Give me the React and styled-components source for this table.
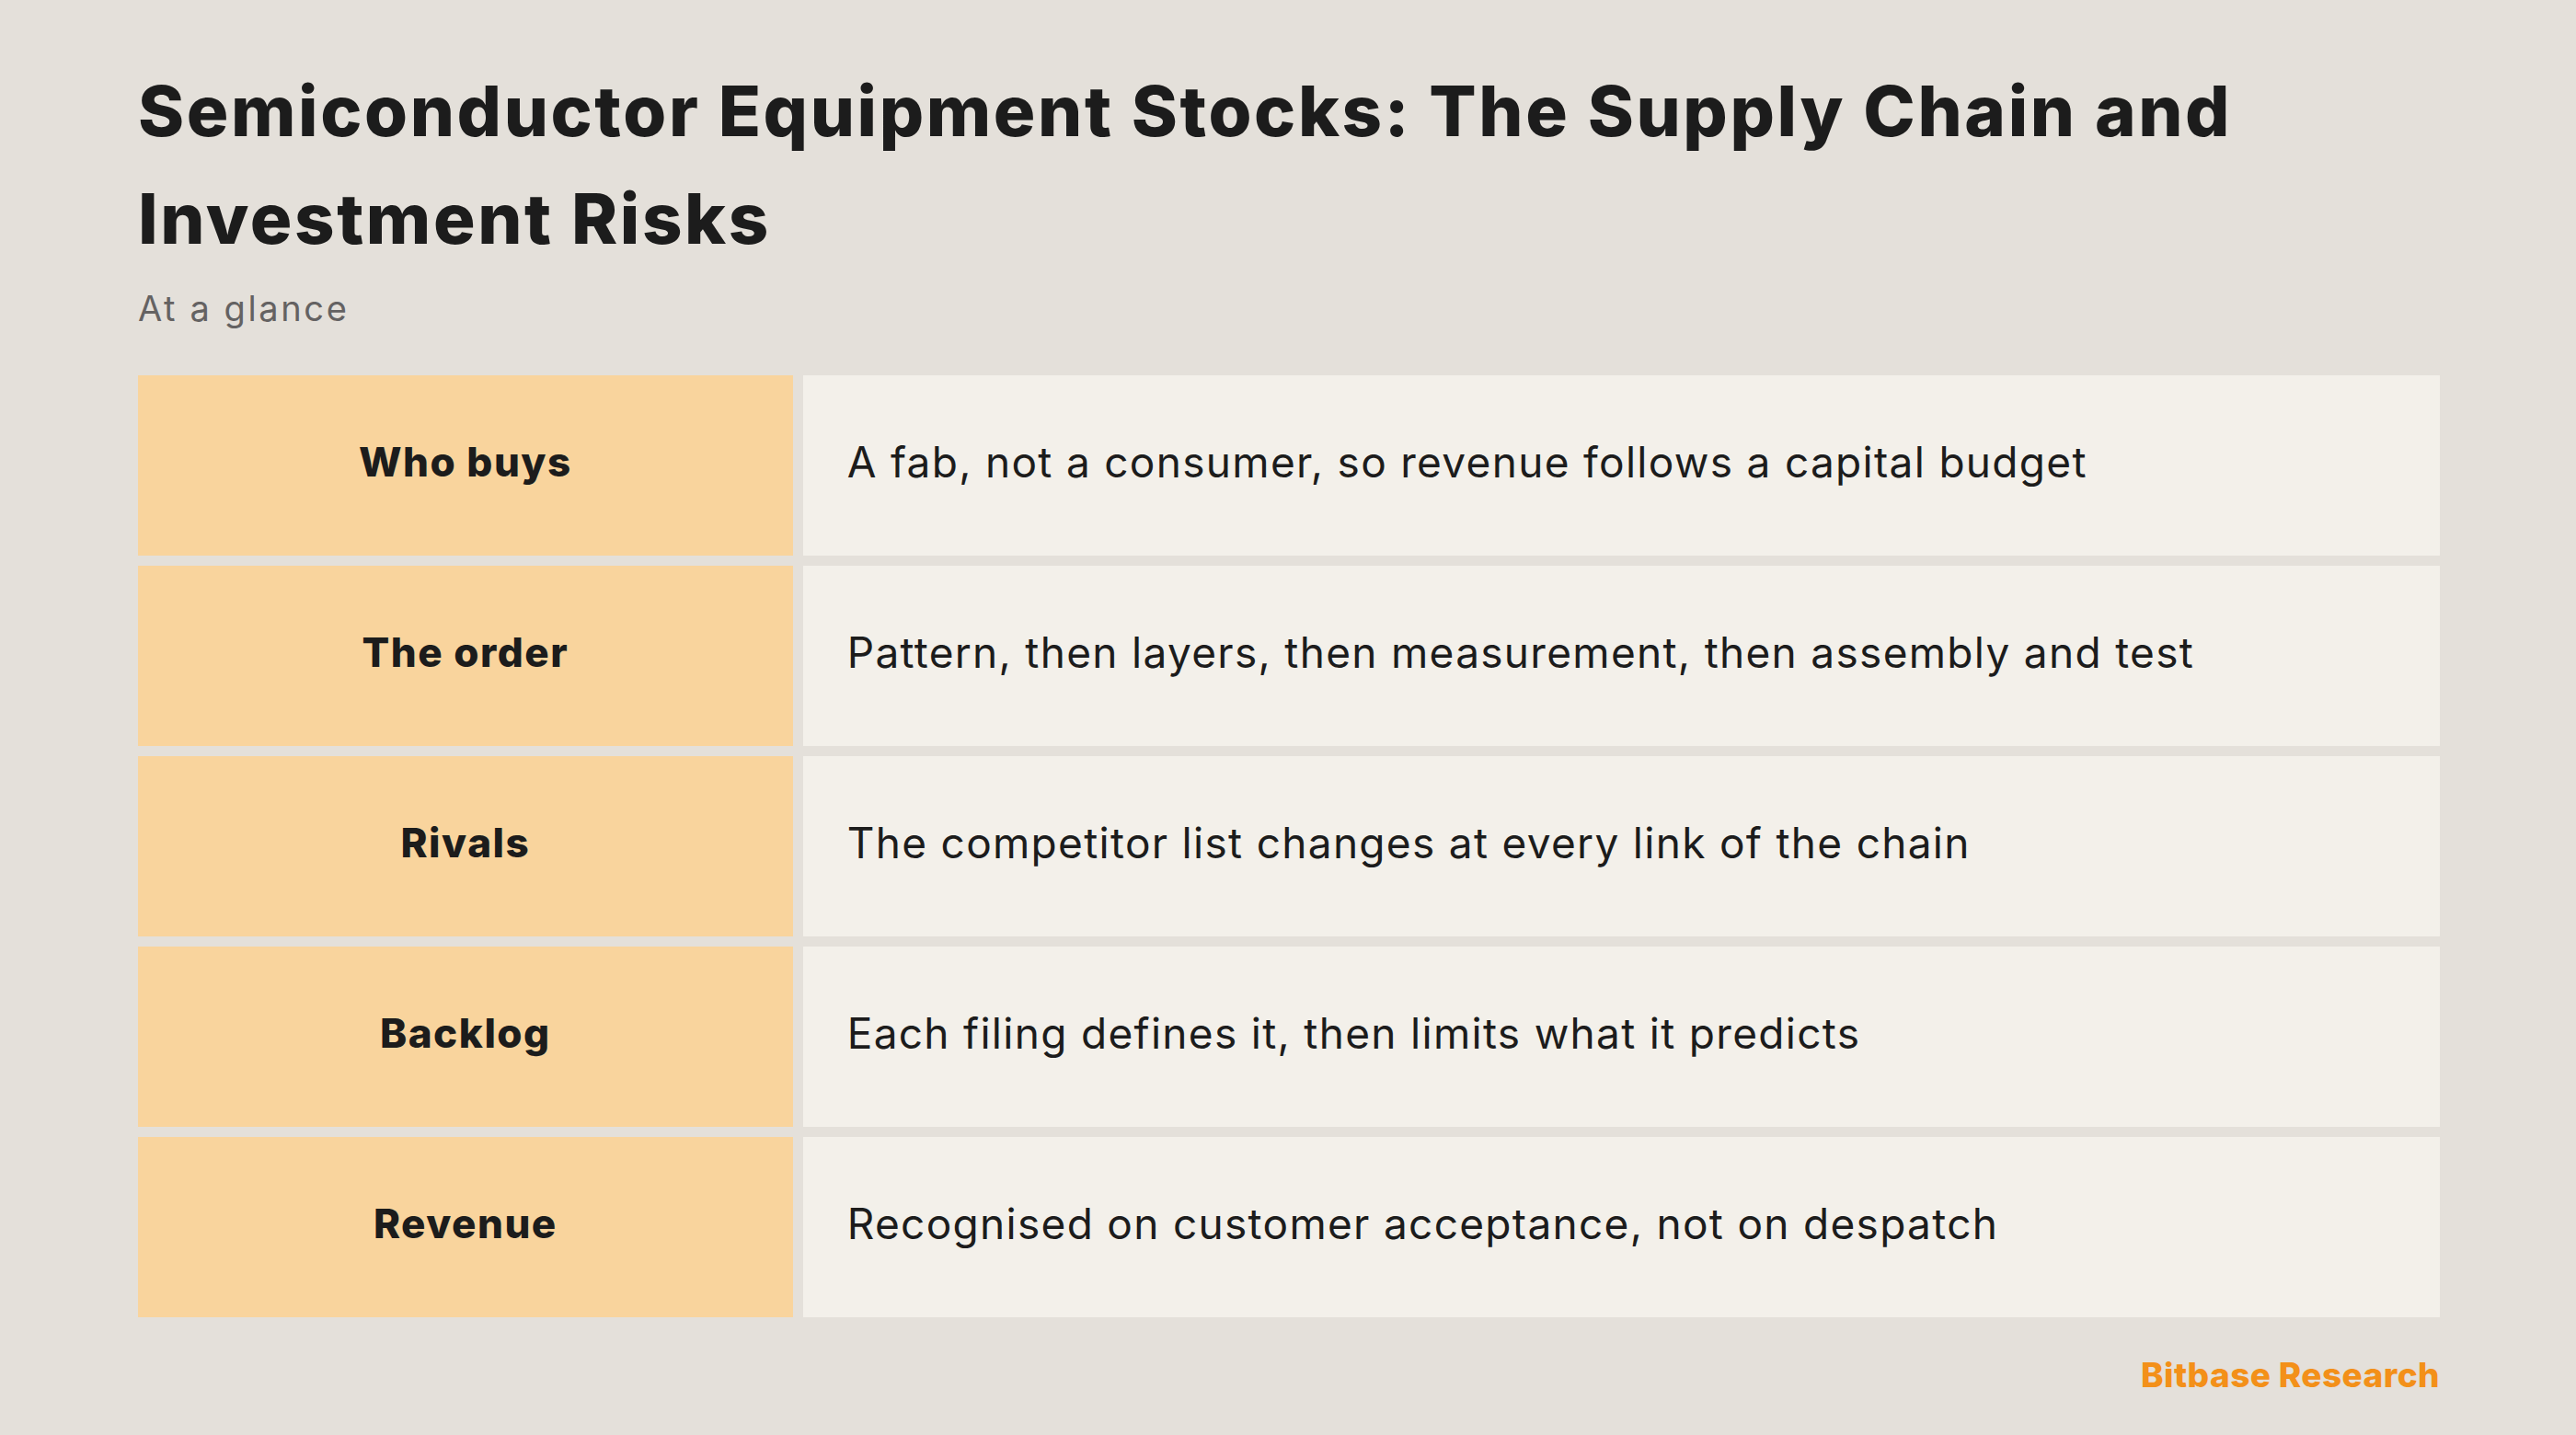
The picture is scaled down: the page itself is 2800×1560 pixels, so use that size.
import React from 'react';
import styled, { createGlobalStyle } from 'styled-components';

const GlobalStyle = createGlobalStyle`
  html, body {
    margin: 0;
    padding: 0;
    background: #e4e0da;
  }
  body {
    font-family: Inter, "Noto Sans", sans-serif;
    color: #1c1c1c;
  }
`;

const Page = styled.main`
  min-height: 100vh;
  box-sizing: border-box;
  padding: 62px 148px 0 150px;
  display: flex;
  flex-direction: column;
`;

const Title = styled.h1`
  margin: 0;
  font-size: 76px;
  line-height: 117px;
  font-weight: 800;
  letter-spacing: 2.6px;
  color: #1c1c1c;
`;

const Subtitle = styled.p`
  margin: 13px 0 0;
  font-size: 38px;
  line-height: 53px;
  font-weight: 400;
  letter-spacing: 2.6px;
  color: #646262;
`;

const Table = styled.section`
  margin-top: 46px;
  display: flex;
  flex-direction: column;
  gap: 11px;
`;

const Row = styled.div`
  display: grid;
  grid-template-columns: 2fr 5fr;
  gap: 11px;
  height: 196px;
`;

const Cell = styled.div`
  display: flex;
  align-items: center;
  box-sizing: border-box;
  padding-bottom: 8px;
`;

const Label = styled(Cell)`
  justify-content: center;
  background: #f9d49d;
  font-size: 44px;
  font-weight: 800;
  letter-spacing: 1.5px;
`;

const Value = styled(Cell)`
  background: #f3f0ea;
  padding-left: 48px;
  font-size: 46px;
  font-weight: 400;
  letter-spacing: 1.3px;
`;

const Footer = styled.div`
  margin-top: 40px;
  text-align: right;
  font-size: 37px;
  font-weight: 800;
  letter-spacing: 0.4px;
  color: #f39019;
`;

const rows = [
  ['Who buys', 'A fab, not a consumer, so revenue follows a capital budget'],
  ['The order', 'Pattern, then layers, then measurement, then assembly and test'],
  ['Rivals', 'The competitor list changes at every link of the chain'],
  ['Backlog', 'Each filing defines it, then limits what it predicts'],
  ['Revenue', 'Recognised on customer acceptance, not on despatch'],
];

export default function App() {
  return (
    <>
      <GlobalStyle />
      <Page>
        <Title>Semiconductor Equipment Stocks: The Supply Chain and Investment Risks</Title>
        <Subtitle>At a glance</Subtitle>
        <Table>
          {rows.map(([label, value]) => (
            <Row key={label}>
              <Label>{label}</Label>
              <Value>{value}</Value>
            </Row>
          ))}
        </Table>
        <Footer>Bitbase Research</Footer>
      </Page>
    </>
  );
}
